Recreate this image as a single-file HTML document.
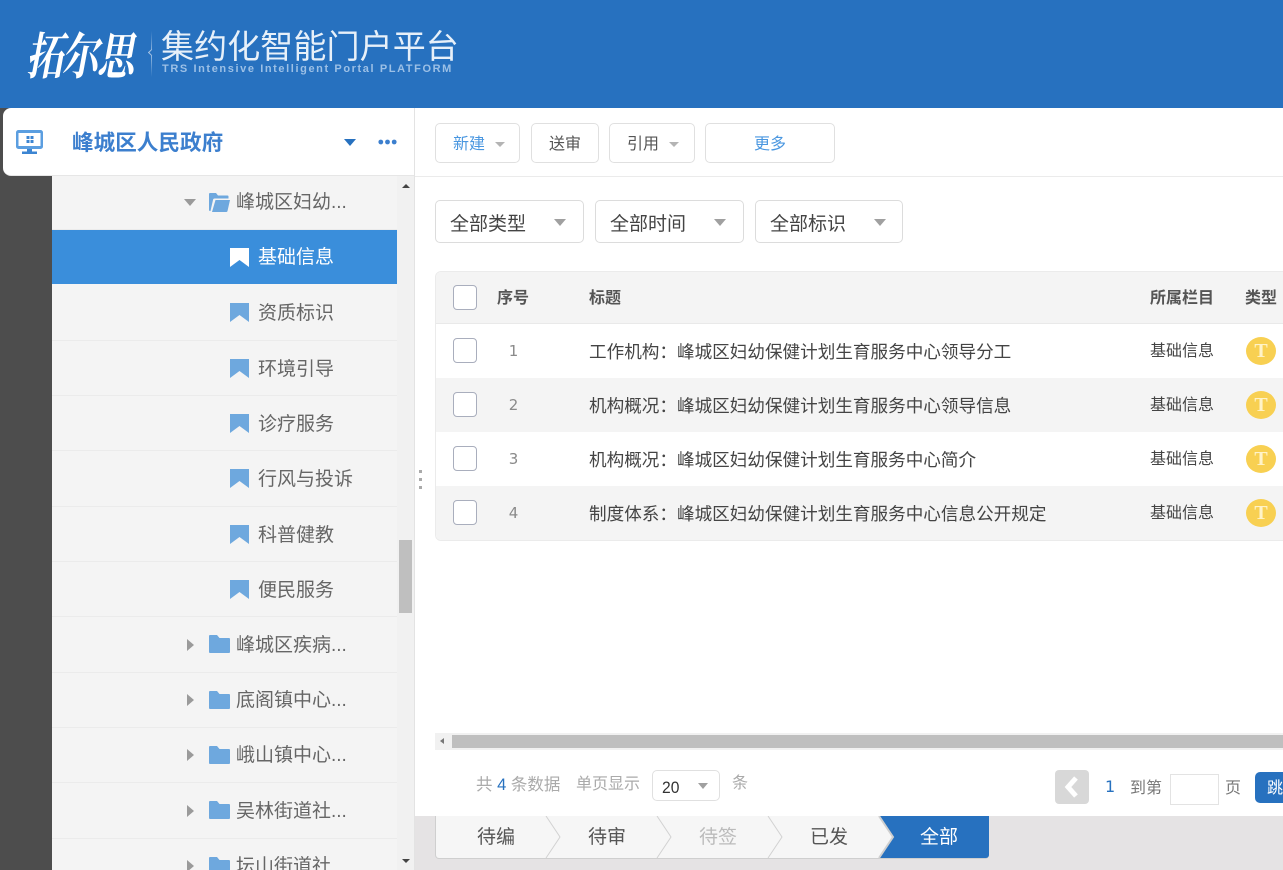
<!DOCTYPE html>
<html lang="zh">
<head>
<meta charset="utf-8">
<title>集约化智能门户平台</title>
<style>
html,body{margin:0;padding:0;width:1283px;height:870px;overflow:hidden;background:#fff}
body{position:relative;font-family:"Liberation Sans","Noto Sans CJK SC","WenQuanYi Zen Hei",sans-serif;color:#555}
div,span,svg{position:absolute;box-sizing:border-box}
.t{white-space:nowrap;line-height:1}
.row{left:52px;width:345px;height:1px;background:#ebebeb}
.tree{font-size:19px;color:#666}
.tri{width:0;height:0}
.btn{border:1px solid #e0e0e0;border-radius:5px;background:#fff}
.sel{top:200px;height:43px;border:1px solid #dcdcdc;border-radius:5px;background:#fff}
.dn{border-left:6px solid transparent;border-right:6px solid transparent;border-top:7px solid #a0a0a0}
.dns{border-left:5px solid transparent;border-right:5px solid transparent;border-top:5px solid #b4b4b4}
.cb{left:453px;width:24px;height:25px;border:1px solid #a9aebd;border-radius:4px;background:#fff}
.coin{left:1246px;width:30px;height:28px;border-radius:50%;background:#f8d052;color:#fff3c8;font:bold 20px/29px "Liberation Serif",serif;text-align:center}
.n{left:497px;width:33px;text-align:center;font-family:"DejaVu Sans",sans-serif;font-size:15px;color:#8a8a8a}
.c1{left:589px;font-size:17.6px;color:#444}
.c2{left:1150px;font-size:16px;color:#444}
</style>
</head>
<body>
<div style="left:0;top:0;width:1283px;height:108px;background:#2771bf"></div>
<div class="t" style="left:26px;top:28px;font:italic bold 50px/1 'Noto Serif CJK SC',serif;color:#fff;letter-spacing:-2px;transform:scaleX(.74);transform-origin:left">拓尔思</div>
<div style="left:151px;top:31px;width:1px;height:46px;background:linear-gradient(#2771bf,#9dbfe3 50%,#2771bf)"></div>
<div style="left:149px;top:50px;width:5px;height:5px;border-left:1px solid #a7c4e4;border-bottom:1px solid #a7c4e4;transform:rotate(45deg);background:#2771bf"></div>
<div class="t" style="left:161px;top:30px;font-size:33px;color:#e7f0f9;letter-spacing:.1px">集约化智能门户平台</div>
<div class="t" style="left:162px;top:64px;font-size:11px;font-weight:bold;color:#9cc0e6;letter-spacing:1.6px">TRS Intensive Intelligent Portal PLATFORM</div>

<div style="left:0;top:108px;width:52px;height:762px;background:#4d4d4d"></div>
<div style="left:52px;top:176px;width:345px;height:694px;background:#f4f4f4"></div>
<div style="left:397px;top:176px;width:17px;height:694px;background:#f1f1f1"></div>
<div style="left:399px;top:540px;width:13px;height:73px;background:#bfbfbf"></div>
<div class="tri" style="left:402px;top:184px;border-left:4px solid transparent;border-right:4px solid transparent;border-bottom:4px solid #444"></div>
<div class="tri" style="left:402px;top:859px;border-left:4px solid transparent;border-right:4px solid transparent;border-top:4px solid #444"></div>
<div style="left:414px;top:108px;width:1px;height:762px;background:#e3e3e3"></div>

<div style="left:3px;top:108px;width:411px;height:68px;background:#fff;border-radius:8px 0 0 8px;border-bottom:1px solid #e6e6e6"></div>
<svg style="left:16px;top:130px" width="28" height="25" viewBox="0 0 28 25"><path fill-rule="evenodd" fill="#5b9ee0" d="M2.500 0h22A2.500 2.500 0 0 1 27 2.500v14a2.500 2.500 0 0 1-2.500 2.500h-22A2.500 2.500 0 0 1 0 16.500v-14A2.500 2.500 0 0 1 2.500 0zM2.500 3v13h22V3z"/><path fill="#3c85d2" d="M11 19h5v2.500h5V24H6v-2.500h5zM10.500 6h3v3h-3zM14.500 6h3v3h-3zM10.500 10h3v3h-3zM14.500 10h3v3h-3z"/></svg>
<div class="t" style="left:72px;top:132px;font-size:21.6px;font-weight:bold;color:#3c7fce">峰城区人民政府</div>
<div class="tri" style="left:344px;top:139px;border-left:6px solid transparent;border-right:6px solid transparent;border-top:7px solid #2771bf"></div>
<svg style="left:378px;top:139px" width="19" height="6" viewBox="0 0 19 6"><circle cx="2.800" cy="3" r="2.400" fill="#3c7fce"/><circle cx="9.500" cy="3" r="2.400" fill="#3c7fce"/><circle cx="16.200" cy="3" r="2.400" fill="#3c7fce"/></svg>

<div class="row" style="top:229px"></div>
<div class="row" style="top:340px"></div>
<div class="row" style="top:395px"></div>
<div class="row" style="top:450px"></div>
<div class="row" style="top:506px"></div>
<div class="row" style="top:561px"></div>
<div class="row" style="top:616px"></div>
<div class="row" style="top:672px"></div>
<div class="row" style="top:727px"></div>
<div class="row" style="top:782px"></div>
<div class="row" style="top:838px"></div>
<div style="left:52px;top:230px;width:345px;height:54px;background:#3a8edb"></div>

<div class="tri" style="left:184px;top:199px;border-left:6px solid transparent;border-right:6px solid transparent;border-top:7px solid #9a9a9a"></div>
<svg style="left:209px;top:193px" width="21" height="19" viewBox="0 0 21 19"><path fill="#6ea8de" d="M1 0h6l2 2.500h9.500a1 1 0 0 1 1 1V5.500H5.500a1.500 1.500 0 0 0-1.400 1L1.500 18H1a1 1 0 0 1-1-1V1a1 1 0 0 1 1-1z"/><path fill="#6ea8de" d="M6.500 7H21l-2.500 11a1.200 1.200 0 0 1-1.200 1H3z"/></svg>
<div class="t tree" style="left:236px;top:193px">峰城区妇幼...</div>

<svg style="left:230px;top:248px" width="19" height="19" viewBox="0 0 19 19"><path fill="#fff" d="M0 0h19v19l-9.500-7L0 19z"/></svg>
<div class="t tree" style="left:258px;top:248px;color:#fff">基础信息</div>
<svg style="left:230px;top:303px" width="19" height="19" viewBox="0 0 19 19"><path fill="#6ea8de" d="M0 0h19v19l-9.500-7L0 19z"/></svg>
<div class="t tree" style="left:258px;top:304px">资质标识</div>
<svg style="left:230px;top:359px" width="19" height="19" viewBox="0 0 19 19"><path fill="#6ea8de" d="M0 0h19v19l-9.500-7L0 19z"/></svg>
<div class="t tree" style="left:258px;top:360px">环境引导</div>
<svg style="left:230px;top:414px" width="19" height="19" viewBox="0 0 19 19"><path fill="#6ea8de" d="M0 0h19v19l-9.500-7L0 19z"/></svg>
<div class="t tree" style="left:258px;top:415px">诊疗服务</div>
<svg style="left:230px;top:469px" width="19" height="19" viewBox="0 0 19 19"><path fill="#6ea8de" d="M0 0h19v19l-9.500-7L0 19z"/></svg>
<div class="t tree" style="left:258px;top:470px">行风与投诉</div>
<svg style="left:230px;top:525px" width="19" height="19" viewBox="0 0 19 19"><path fill="#6ea8de" d="M0 0h19v19l-9.500-7L0 19z"/></svg>
<div class="t tree" style="left:258px;top:526px">科普健教</div>
<svg style="left:230px;top:580px" width="19" height="19" viewBox="0 0 19 19"><path fill="#6ea8de" d="M0 0h19v19l-9.500-7L0 19z"/></svg>
<div class="t tree" style="left:258px;top:581px">便民服务</div>

<div class="tri" style="left:187px;top:639px;border-top:6.500px solid transparent;border-bottom:6.500px solid transparent;border-left:7px solid #9a9a9a"></div>
<svg style="left:209px;top:635px" width="21" height="18" viewBox="0 0 21 18"><path fill="#6ea8de" d="M1 0h7l2.500 3H20a1 1 0 0 1 1 1v13a1 1 0 0 1-1 1H1a1 1 0 0 1-1-1V1a1 1 0 0 1 1-1z"/></svg>
<div class="t tree" style="left:236px;top:636px">峰城区疾病...</div>
<div class="tri" style="left:187px;top:694px;border-top:6.500px solid transparent;border-bottom:6.500px solid transparent;border-left:7px solid #9a9a9a"></div>
<svg style="left:209px;top:691px" width="21" height="18" viewBox="0 0 21 18"><path fill="#6ea8de" d="M1 0h7l2.500 3H20a1 1 0 0 1 1 1v13a1 1 0 0 1-1 1H1a1 1 0 0 1-1-1V1a1 1 0 0 1 1-1z"/></svg>
<div class="t tree" style="left:236px;top:691px">底阁镇中心...</div>
<div class="tri" style="left:187px;top:749px;border-top:6.500px solid transparent;border-bottom:6.500px solid transparent;border-left:7px solid #9a9a9a"></div>
<svg style="left:209px;top:746px" width="21" height="18" viewBox="0 0 21 18"><path fill="#6ea8de" d="M1 0h7l2.500 3H20a1 1 0 0 1 1 1v13a1 1 0 0 1-1 1H1a1 1 0 0 1-1-1V1a1 1 0 0 1 1-1z"/></svg>
<div class="t tree" style="left:236px;top:746px">峨山镇中心...</div>
<div class="tri" style="left:187px;top:805px;border-top:6.500px solid transparent;border-bottom:6.500px solid transparent;border-left:7px solid #9a9a9a"></div>
<svg style="left:209px;top:801px" width="21" height="18" viewBox="0 0 21 18"><path fill="#6ea8de" d="M1 0h7l2.500 3H20a1 1 0 0 1 1 1v13a1 1 0 0 1-1 1H1a1 1 0 0 1-1-1V1a1 1 0 0 1 1-1z"/></svg>
<div class="t tree" style="left:236px;top:802px">吴林街道社...</div>
<div class="tri" style="left:187px;top:860px;border-top:6.500px solid transparent;border-bottom:6.500px solid transparent;border-left:7px solid #9a9a9a"></div>
<svg style="left:209px;top:857px" width="21" height="18" viewBox="0 0 21 18"><path fill="#6ea8de" d="M1 0h7l2.500 3H20a1 1 0 0 1 1 1v13a1 1 0 0 1-1 1H1a1 1 0 0 1-1-1V1a1 1 0 0 1 1-1z"/></svg>
<div class="t tree" style="left:236px;top:857px">坛山街道社</div>

<div style="left:419px;top:470px;width:3px;height:3px;background:#aaa"></div>
<div style="left:419px;top:478px;width:3px;height:3px;background:#aaa"></div>
<div style="left:419px;top:486px;width:3px;height:3px;background:#aaa"></div>

<div style="left:415px;top:176px;width:868px;height:1px;background:#ebebeb"></div>
<div class="btn" style="left:435px;top:123px;width:85px;height:40px"></div>
<div class="t" style="left:453px;top:137px;font-size:16px;color:#4a97e0">新建</div>
<div class="tri dns" style="left:495px;top:142px"></div>
<div class="btn" style="left:531px;top:123px;width:68px;height:40px"></div>
<div class="t" style="left:549px;top:137px;font-size:16px;color:#555">送审</div>
<div class="btn" style="left:609px;top:123px;width:86px;height:40px"></div>
<div class="t" style="left:627px;top:137px;font-size:16px;color:#555">引用</div>
<div class="tri dns" style="left:669px;top:142px"></div>
<div class="btn" style="left:705px;top:123px;width:130px;height:40px"></div>
<div class="t" style="left:754px;top:137px;font-size:16px;color:#4a97e0">更多</div>

<div class="sel" style="left:435px;width:149px"></div>
<div class="t" style="left:450px;top:215px;font-size:19px;color:#444">全部类型</div>
<div class="tri dn" style="left:554px;top:219px"></div>
<div class="sel" style="left:595px;width:149px"></div>
<div class="t" style="left:610px;top:215px;font-size:19px;color:#444">全部时间</div>
<div class="tri dn" style="left:714px;top:219px"></div>
<div class="sel" style="left:755px;width:148px"></div>
<div class="t" style="left:770px;top:215px;font-size:19px;color:#444">全部标识</div>
<div class="tri dn" style="left:874px;top:219px"></div>

<div style="left:435px;top:271px;width:860px;height:270px;border:1px solid #ebebeb;border-radius:6px;background:#fff;overflow:hidden"></div>
<div style="left:436px;top:272px;width:847px;height:51px;background:#f4f4f4;border-radius:5px 0 0 0"></div>
<div style="left:436px;top:323px;width:847px;height:1px;background:#e9e9e9"></div>
<div style="left:436px;top:378px;width:847px;height:54px;background:#f4f4f4"></div>
<div style="left:436px;top:486px;width:847px;height:54px;background:#f4f4f4;border-radius:0 0 0 5px"></div>

<div class="cb" style="top:285px"></div>
<div class="t" style="left:497px;top:291px;font-size:16px;font-weight:bold;color:#555">序号</div>
<div class="t" style="left:589px;top:291px;font-size:16px;font-weight:bold;color:#555">标题</div>
<div class="t" style="left:1150px;top:291px;font-size:16px;font-weight:bold;color:#555">所属栏目</div>
<div class="t" style="left:1245px;top:291px;font-size:16px;font-weight:bold;color:#555">类型</div>

<div class="cb" style="top:338px"></div>
<div class="t n" style="top:344px">1</div>
<div class="t c1" style="top:344px">工作机构：峰城区妇幼保健计划生育服务中心领导分工</div>
<div class="t c2" style="top:344px">基础信息</div>
<div class="coin" style="top:337px">T</div>

<div class="cb" style="top:392px"></div>
<div class="t n" style="top:398px">2</div>
<div class="t c1" style="top:398px">机构概况：峰城区妇幼保健计划生育服务中心领导信息</div>
<div class="t c2" style="top:398px">基础信息</div>
<div class="coin" style="top:391px">T</div>

<div class="cb" style="top:446px"></div>
<div class="t n" style="top:452px">3</div>
<div class="t c1" style="top:452px">机构概况：峰城区妇幼保健计划生育服务中心简介</div>
<div class="t c2" style="top:452px">基础信息</div>
<div class="coin" style="top:445px">T</div>

<div class="cb" style="top:500px"></div>
<div class="t n" style="top:506px">4</div>
<div class="t c1" style="top:506px">制度体系：峰城区妇幼保健计划生育服务中心信息公开规定</div>
<div class="t c2" style="top:506px">基础信息</div>
<div class="coin" style="top:499px">T</div>

<div style="left:435px;top:733px;width:848px;height:17px;background:#f1f1f1"></div>
<div style="left:452px;top:735px;width:831px;height:13px;background:#bfbfbf"></div>
<div class="tri" style="left:440px;top:738px;border-top:3.500px solid transparent;border-bottom:3.500px solid transparent;border-right:4px solid #777"></div>

<div class="t" style="left:476px;top:777px;font-size:16.500px;color:#aaa">共 <span style="position:static;color:#2771bf">4</span> 条数据</div>
<div class="t" style="left:576px;top:777px;font-size:16px;color:#aaa">单页显示</div>
<div class="btn" style="left:652px;top:770px;width:68px;height:31px"></div>
<div class="t" style="left:662px;top:779px;font-size:17px;color:#333;transform:scaleX(.92);transform-origin:left">20</div>
<div class="tri" style="left:698px;top:783px;border-left:5.500px solid transparent;border-right:5.500px solid transparent;border-top:6px solid #a0a0a0"></div>
<div class="t" style="left:732px;top:776px;font-size:16px;color:#aaa">条</div>

<div style="left:1055px;top:770px;width:34px;height:34px;border-radius:4px;background:#d8d8d8"></div>
<svg style="left:1063px;top:776px" width="18" height="22" viewBox="0 0 18 22"><path fill="none" stroke="#fff" stroke-width="5" d="M13 2 5 11l8 9"/></svg>
<div class="t" style="left:1105px;top:779px;font-family:'DejaVu Sans',sans-serif;font-size:16px;color:#2771bf">1</div>
<div class="t" style="left:1130px;top:781px;font-size:16px;color:#777">到第</div>
<div style="left:1170px;top:774px;width:49px;height:31px;border:1px solid #e3e3e3;background:#fff"></div>
<div class="t" style="left:1225px;top:781px;font-size:16px;color:#777">页</div>
<div style="left:1255px;top:772px;width:40px;height:31px;border-radius:5px;background:#2771bf"></div>
<div class="t" style="left:1267px;top:781px;font-size:16px;color:#fff">跳转</div>

<div style="left:415px;top:816px;width:868px;height:54px;background:#e5e3e4"></div>
<div style="left:435px;top:816px;width:554px;height:43px;background:#f6f6f6;border:1px solid #cfcfcf;border-top:0;border-radius:0 0 4px 4px"></div>
<svg style="left:435px;top:816px" width="554" height="43" viewBox="0 0 554 43"><path fill="none" stroke="#d2d2d2" d="M111 0l14 21-14 21M222 0l14 21-14 21M333 0l14 21-14 21"/><path fill="#2771bf" d="M444 0H554v39a3 3 0 0 1-3 3H444l14-21z"/><path fill="none" stroke="#cfcfcf" stroke-width="2" d="M444 0l14 21-14 21"/></svg>
<div class="t" style="left:477px;top:828px;font-size:19px;color:#555">待编</div>
<div class="t" style="left:588px;top:828px;font-size:19px;color:#555">待审</div>
<div class="t" style="left:699px;top:828px;font-size:19px;color:#bbb">待签</div>
<div class="t" style="left:810px;top:828px;font-size:19px;color:#555">已发</div>
<div class="t" style="left:920px;top:828px;font-size:19px;color:#fff">全部</div>
</body>
</html>
